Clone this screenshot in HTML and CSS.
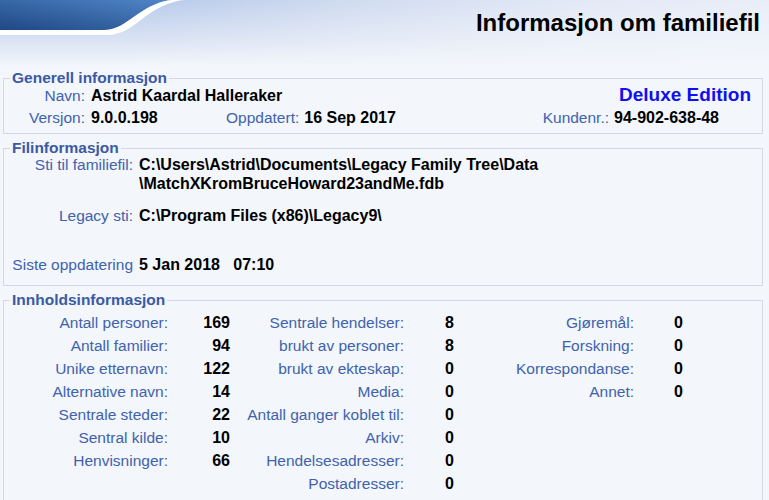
FILE: index.html
```html
<!DOCTYPE html>
<html lang="no">
<head>
    <meta charset="UTF-8">
    <meta name="viewport" content="width=device-width, initial-scale=1.0">
    <title>Informasjon om familiefil</title>
    <link rel="stylesheet" href="styles.css">
</head>
<body>

    <!-- Topp: blå bølge + tittel -->
    <div class="header">
        <svg class="swoosh" width="190" height="40" viewBox="0 0 190 40">
            <defs>
                <linearGradient id="wave" x1="0" y1="1" x2="1" y2="0">
                    <stop offset="0" stop-color="#1f4884"/>
                    <stop offset="1" stop-color="#5186c9"/>
                </linearGradient>
            </defs>
            <path d="M0 0 H172 C160 1 150 6 138 14 C125 23 117 30 104 30 H0 Z" fill="url(#wave)"/>
            <path d="M0 30 H104 C117 30 125 23 138 14 C150 6 160 1 172 0 H185 C171 1 159 7 146 16 C132 27 122 35 107 35 H0 Z" fill="#ffffff"/>
        </svg>
        <h1 class="title">Informasjon om familiefil</h1>
    </div>

    <!-- Generell informasjon -->
    <fieldset class="box">
        <legend>Generell informasjon</legend>
        <div class="line">
            <span class="lbl w-gen">Navn:</span>
            <span class="val">Astrid Kaardal Halleraker</span>
            <span class="edition">Deluxe Edition</span>
        </div>
        <div class="line">
            <span class="lbl w-gen">Versjon:</span>
            <span class="val version">9.0.0.198</span>
            <span class="lbl">Oppdatert:</span>
            <span class="val">16 Sep 2017</span>
            <span class="customer">
                <span class="lbl">Kundenr.:</span>
                <span class="val">94-902-638-48</span>
            </span>
        </div>
    </fieldset>

    <!-- Filinformasjon -->
    <fieldset class="box files">
        <legend>Filinformasjon</legend>
        <div class="frow">
            <span class="lbl">Sti til familiefil:</span>
            <span class="val">C:\Users\Astrid\Documents\Legacy Family Tree\Data<br>\MatchXKromBruceHoward23andMe.fdb</span>
        </div>
        <div class="frow legacy">
            <span class="lbl">Legacy sti:</span>
            <span class="val">C:\Program Files (x86)\Legacy9\</span>
        </div>
        <div class="frow updated">
            <span class="lbl">Siste oppdatering</span>
            <span class="val">5 Jan 2018&nbsp;&nbsp; 07:10</span>
        </div>
    </fieldset>

    <!-- Innholdsinformasjon -->
    <fieldset class="box content">
        <legend>Innholdsinformasjon</legend>
        <div class="cols">
            <div class="stats col1">
                <span class="lbl">Antall personer:</span><span class="val">169</span>
                <span class="lbl">Antall familier:</span><span class="val">94</span>
                <span class="lbl">Unike etternavn:</span><span class="val">122</span>
                <span class="lbl">Alternative navn:</span><span class="val">14</span>
                <span class="lbl">Sentrale steder:</span><span class="val">22</span>
                <span class="lbl">Sentral kilde:</span><span class="val">10</span>
                <span class="lbl">Henvisninger:</span><span class="val">66</span>
            </div>
            <div class="stats col2">
                <span class="lbl">Sentrale hendelser:</span><span class="val">8</span>
                <span class="lbl">brukt av personer:</span><span class="val">8</span>
                <span class="lbl">brukt av ekteskap:</span><span class="val">0</span>
                <span class="lbl">Media:</span><span class="val">0</span>
                <span class="lbl">Antall ganger koblet til:</span><span class="val">0</span>
                <span class="lbl">Arkiv:</span><span class="val">0</span>
                <span class="lbl">Hendelsesadresser:</span><span class="val">0</span>
                <span class="lbl">Postadresser:</span><span class="val">0</span>
            </div>
            <div class="stats col3">
                <span class="lbl">Gjøremål:</span><span class="val">0</span>
                <span class="lbl">Forskning:</span><span class="val">0</span>
                <span class="lbl">Korrespondanse:</span><span class="val">0</span>
                <span class="lbl">Annet:</span><span class="val">0</span>
            </div>
        </div>
    </fieldset>

</body>
</html>
```

FILE: styles.css
```css
body {
    margin: 0;
    font-family: "Liberation Sans", Arial, sans-serif;
    background: #f3f6fb;
    color: black;
}

/* header */
.header {
    height: 71px;
    display: flex;
    justify-content: space-between;
    align-items: flex-start;
    background:
        linear-gradient(to bottom, rgba(243, 246, 251, 0) 0, rgba(243, 246, 251, 0.55) 38px, #f3f6fb 66px),
        linear-gradient(100deg, #b7c9ea 18%, #d0dbf0 45%, #e3e9f6 75%, #e9eef8 100%);
}
.swoosh {
    display: block;
    flex: none;
}
.title {
    margin: 0;
    padding: 10px 9px 0 0;
    font-size: 24px;
    line-height: 26px;
    font-weight: bold;
}

/* group boxes */
.box {
    margin: 0 6px 7px 3px;
    padding: 0 11px 4px 6px;
    border: 1px solid #d5d9df;
    min-inline-size: 0;
}
.box legend {
    padding: 0 2px;
    font-size: 15.5px;
    line-height: 14px;
    font-weight: bold;
    color: #3a5aa3;
}
.lbl {
    font-size: 15.5px;
    color: #4062ad;
    text-align: right;
    white-space: nowrap;
}
.val {
    font-size: 16px;
    font-weight: bold;
    white-space: nowrap;
}

/* generell */
.line {
    display: flex;
    align-items: baseline;
    gap: 5px;
    line-height: 22px;
}
.w-gen {
    width: 75px;
    margin-right: 1px;
}
.version {
    width: 130px;
}
.edition {
    margin-left: auto;
    font-size: 19px;
    line-height: 20px;
    font-weight: bold;
    color: #1010f0;
}
.customer {
    margin-left: auto;
    margin-right: 32px;
    display: flex;
    align-items: baseline;
    gap: 5px;
}

/* filer */
.files {
    padding-bottom: 11px;
}
.frow {
    display: grid;
    grid-template-columns: 123px auto;
    column-gap: 6px;
    align-items: baseline;
    line-height: 19px;
}
.legacy {
    margin-top: 13px;
}
.updated {
    margin-top: 30px;
}

/* innhold */
.content {
    padding-top: 4px;
    padding-bottom: 10px;
}
.cols {
    display: flex;
}
.stats {
    display: grid;
    align-items: baseline;
    align-content: start;
    line-height: 23px;
}
.stats .val {
    text-align: right;
}
.col1 {
    grid-template-columns: 158px 62px;
}
.col2 {
    grid-template-columns: 174px 50px;
}
.col3 {
    grid-template-columns: 180px 49px;
}
```
